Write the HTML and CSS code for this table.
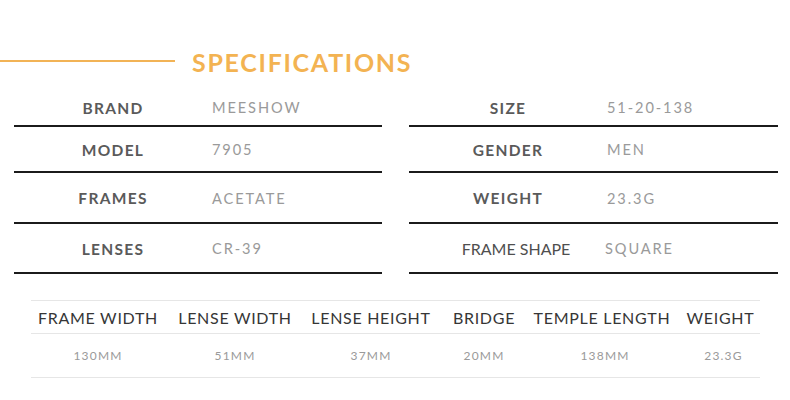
FILE: index.html
```html
<!DOCTYPE html>
<html>
<head>
<meta charset="utf-8">
<link rel="stylesheet" href="styles.css">
</head>
<body>
<div class="page">
  <div class="heading">
    <div class="heading-line"></div>
    <h1 class="heading-text">SPECIFICATIONS</h1>
  </div>

  <div class="specs">
    <div class="spec r1"><span class="label">BRAND</span><span class="value">MEESHOW</span></div>
    <div class="spec r1"><span class="label">SIZE</span><span class="value">51-20-138</span></div>
    <div class="spec r2"><span class="label">MODEL</span><span class="value">7905</span></div>
    <div class="spec r2"><span class="label">GENDER</span><span class="value">MEN</span></div>
    <div class="spec r3"><span class="label">FRAMES</span><span class="value">ACETATE</span></div>
    <div class="spec r3"><span class="label">WEIGHT</span><span class="value">23.3G</span></div>
    <div class="spec r4"><span class="label">LENSES</span><span class="value">CR-39</span></div>
    <div class="spec r4"><span class="label label-plain">FRAME SHAPE</span><span class="value value-shift">SQUARE</span></div>
  </div>

  <table class="dims">
    <colgroup>
      <col class="c1"><col class="c2"><col class="c3"><col class="c4"><col class="c5"><col class="c6">
    </colgroup>
    <thead>
      <tr>
        <th>FRAME WIDTH</th><th>LENSE WIDTH</th><th>LENSE HEIGHT</th><th>BRIDGE</th><th>TEMPLE LENGTH</th><th class="last">WEIGHT</th>
      </tr>
    </thead>
    <tbody>
      <tr>
        <td>130MM</td><td>51MM</td><td>37MM</td><td>20MM</td><td class="wide">138MM</td><td class="last">23.3G</td>
      </tr>
    </tbody>
  </table>
</div>
</body>
</html>
```

FILE: styles.css
```css
html, body {
  margin: 0;
  padding: 0;
  background: #ffffff;
}

body {
  font-family: "Lato", "DejaVu Sans", sans-serif;
  width: 790px;
  height: 400px;
  overflow: hidden;
}

.page {
  padding-top: 41px;
}

.heading {
  display: flex;
  align-items: center;
  height: 40px;
  gap: 17px;
}

.heading-line {
  width: 175px;
  height: 2px;
  background: #f2b356;
}

.heading-text {
  margin: 0;
  font-size: 25px;
  font-weight: 700;
  letter-spacing: 1.7px;
  color: #f3b352;
  line-height: 1;
  position: relative;
  top: 1px;
}

.specs {
  margin-top: 8px;
  display: grid;
  grid-template-columns: 368px 369px;
  grid-template-rows: 38px 46px 51px 50px;
  column-gap: 27px;
  padding-left: 14px;
}

.spec {
  display: flex;
  align-items: center;
  border-bottom: 2px solid #1b1b1b;
  box-sizing: border-box;
  padding-top: 1px;
}

.label {
  width: 198px;
  flex: none;
  text-align: center;
  font-size: 15.5px;
  font-weight: 700;
  letter-spacing: 1.3px;
  color: #5a5a5a;
}

.label-plain {
  font-weight: 400;
  letter-spacing: 0;
  font-size: 16px;
  color: #4f4f4f;
  padding-left: 16px;
  box-sizing: border-box;
}

.value {
  font-size: 14.6px;
  font-weight: 400;
  letter-spacing: 1.9px;
  color: #9a9a9a;
}

.value-shift {
  margin-left: -2px;
}

.dims {
  margin-top: 26px;
  margin-left: 31px;
  width: 729px;
  border-collapse: collapse;
  table-layout: fixed;
}

.c1 { width: 134px; }
.c2 { width: 140px; }
.c3 { width: 132px; }
.c4 { width: 94px; }
.c5 { width: 142px; }
.c6 { width: 87px; }

.dims th,
.dims td {
  padding: 0;
  text-align: center;
  white-space: nowrap;
}

.dims th {
  height: 32px;
  font-size: 16px;
  font-weight: 400;
  letter-spacing: 0.7px;
  color: #363636;
  border-top: 1px solid #e6e6e6;
  border-bottom: 1px solid #e6e6e6;
}

.dims td {
  height: 43px;
  font-size: 12px;
  letter-spacing: 1.2px;
  color: #9a9a9a;
  border-bottom: 1px solid #e6e6e6;
}

.dims .last {
  padding-left: 8px;
}

.dims td.last {
  padding-left: 14px;
}

.dims td.wide {
  padding-left: 6px;
}
```
